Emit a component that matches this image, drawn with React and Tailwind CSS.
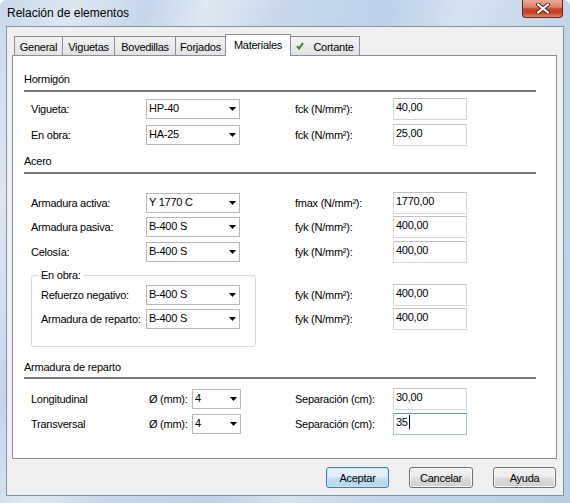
import React from "react";

function Combo({ value, wide = true }) {
  return (
    <div
      className={
        wide
          ? "w-[94px] h-[20px] flex items-center justify-between bg-white border border-[#b9b9b9] pl-[2px] pr-[3px]"
          : "w-[49px] h-[20px] flex items-center justify-between bg-white border border-[#b9b9b9] pl-[2px] pr-[3px]"
      }
    >
      <span className="leading-[14px] -mt-[2px]">{value}</span>
      <svg width="7" height="4" viewBox="0 0 7 4" className="shrink-0">
        <path d="M0 0H7L3.5 4Z" fill="#000" />
      </svg>
    </div>
  );
}

function Field({ value, focused }) {
  return (
    <div
      className={
        focused
          ? "w-[74px] h-[22px] flex items-start bg-white border border-[#9cc3e6] border-t-[#5d96cb] pl-[2px] pt-[1px]"
          : "w-[74px] h-[22px] flex items-start bg-white border border-[#d6d6d6] border-t-[#c2c2c2] pl-[2px] pt-[1px]"
      }
    >
      <span className="leading-[14px]">{value}</span>
      {focused && <span className="w-px h-[14px] bg-black ml-[1px]" />}
    </div>
  );
}

function Header({ title, className, lineClass }) {
  return (
    <div className={className}>
      <div className="h-[14px] leading-[14px]">{title}</div>
      <div className={lineClass} />
    </div>
  );
}

function Right({ label, value, focused }) {
  return (
    <div className="flex items-center">
      <div className="w-[98px] leading-[14px]">{label}</div>
      <Field value={value} focused={focused} />
    </div>
  );
}

function Row({ label, combo, rlabel, value, className }) {
  return (
    <div className={className}>
      <div className="w-[115px] leading-[14px]">{label}</div>
      <Combo value={combo} />
      <div className="w-[55px]" />
      <Right label={rlabel} value={value} />
    </div>
  );
}

function Tab({ label, className, check }) {
  return (
    <div className={className}>
      {check && (
        <svg width="8" height="8" viewBox="0 0 8 8" className="mr-[9px] -mt-[2px]">
          <path d="M1 4.2L3 6.5L7 1" fill="none" stroke="#2f8a16" strokeWidth="2" />
        </svg>
      )}
      <span>{label}</span>
    </div>
  );
}

const inactiveTab =
  "h-[19px] flex items-center justify-center border border-b-0 border-[#8c8f97] bg-[linear-gradient(#f4f4f4,#e2e2e2)] leading-[14px] pt-[1px]";

export default function App() {
  return (
    <div className="w-[570px] h-[503px] flex flex-col text-[11px] tracking-[-0.25px] text-black font-['Liberation_Sans',Arial,sans-serif] rounded-t-[6px] overflow-hidden bg-[linear-gradient(110deg,#c9d9ea_0%,#dde7f2_10%,#c5d6e9_20%,#e0e9f3_28%,#c8d8ea_38%,#bdd1e7_52%,#d7e3f0_62%,#c2d5e9_75%,#b8cee6_100%)]">
      {/* Title bar */}
      <div className="h-[26px] flex items-start shrink-0">
        <div className="pl-[7px] pt-[6px] text-[12px] tracking-[0px] leading-[14px] flex-1">
          Relación de elementos
        </div>
        <div className="mr-[7px] w-[41px] h-[18px] rounded-b-[4px] border border-t-0 border-[#6a2316] flex items-center justify-center bg-[linear-gradient(#eaa999_0%,#d98470_42%,#c5442c_52%,#c9462b_78%,#e08a6c_100%)]">
          <svg width="14" height="11" viewBox="0 0 14 11">
            <path d="M2 1.5L12 9.5M12 1.5L2 9.5" stroke="#5a2a22" strokeWidth="4" strokeLinecap="round" />
            <path d="M2 1.5L12 9.5M12 1.5L2 9.5" stroke="#ffffff" strokeWidth="2.2" strokeLinecap="round" />
          </svg>
        </div>
      </div>

      {/* Client */}
      <div className="flex-1 mx-[6px] mb-[7px] border border-[#7f93ab] bg-[#f0f0f0] flex flex-col pt-[7px] pl-[5px] pr-[6px]">
        {/* Tabs */}
        <div className="h-[21px] flex items-end pl-[2px] shrink-0">
          <Tab label="General" className={`w-[49px] ${inactiveTab}`} />
          <Tab label="Viguetas" className={`w-[53px] -ml-px ${inactiveTab}`} />
          <Tab label="Bovedillas" className={`w-[62px] -ml-px ${inactiveTab}`} />
          <Tab label="Forjados" className={`w-[51px] -ml-px ${inactiveTab}`} />
          <div className="w-[66px] -ml-px h-[22px] -mb-px relative z-10 bg-white border border-b-0 border-[#8c8f97] flex items-start justify-center pt-[3px] leading-[14px]">
            Materiales
          </div>
          <Tab label="Cortante" check className={`w-[70px] -ml-px ${inactiveTab}`} />
        </div>

        {/* Panel */}
        <div className="h-[404px] shrink-0 bg-white border border-[#8c8f97] pl-[11px] pr-[20px]">
          <Header title="Hormigón" className="mt-[16px]" lineClass="mt-[4px] h-[2px] bg-[#777777]" />
          <Row className="mt-[6px] h-[22px] flex items-center pl-[7px]" label="Vigueta:" combo="HP-40" rlabel="fck (N/mm²):" value="40,00" />
          <Row className="mt-[4px] h-[22px] flex items-center pl-[7px]" label="En obra:" combo="HA-25" rlabel="fck (N/mm²):" value="25,00" />

          <Header title="Acero" className="mt-[8px]" lineClass="mt-[4px] h-[2px] bg-[#777777]" />
          <Row className="mt-[18px] h-[22px] flex items-center pl-[7px]" label="Armadura activa:" combo="Y 1770 C" rlabel="fmax (N/mm²):" value="1770,00" />
          <Row className="mt-[2px] h-[22px] flex items-center pl-[7px]" label="Armadura pasiva:" combo="B-400 S" rlabel="fyk (N/mm²):" value="400,00" />
          <Row className="mt-[3px] h-[22px] flex items-center pl-[7px]" label="Celosía:" combo="B-400 S" rlabel="fyk (N/mm²):" value="400,00" />

          <div className="mt-[5px] flex items-start pl-[7px]">
            <fieldset className="w-[225px] border border-[#d5dbe0] rounded-[3px] pb-[16px]">
              <legend className="ml-[7px] px-[2px] leading-[14px] h-[14px]">En obra:</legend>
              <div className="mt-[2px] h-[22px] flex items-center pl-[9px]">
                <div className="w-[105px] leading-[14px]">Refuerzo negativo:</div>
                <Combo value="B-400 S" />
              </div>
              <div className="mt-[2px] h-[22px] flex items-center pl-[9px]">
                <div className="w-[105px] leading-[14px]">Armadura de reparto:</div>
                <Combo value="B-400 S" />
              </div>
            </fieldset>
            <div className="ml-[39px] pt-[16px] flex flex-col">
              <div className="h-[22px] flex items-center">
                <Right label="fyk (N/mm²):" value="400,00" />
              </div>
              <div className="mt-[2px] h-[22px] flex items-center">
                <Right label="fyk (N/mm²):" value="400,00" />
              </div>
            </div>
          </div>

          <Header title="Armadura de reparto" className="mt-[13px]" lineClass="mt-[3px] h-[2px] bg-[#777777]" />
          <div className="mt-[9px] h-[22px] flex items-center pl-[7px]">
            <div className="w-[118px] leading-[14px]">Longitudinal</div>
            <div className="w-[43px] leading-[14px]">Ø (mm):</div>
            <Combo value="4" wide={false} />
            <div className="w-[54px]" />
            <Right label="Separación (cm):" value="30,00" />
          </div>
          <div className="mt-[3px] h-[22px] flex items-center pl-[7px]">
            <div className="w-[118px] leading-[14px]">Transversal</div>
            <div className="w-[43px] leading-[14px]">Ø (mm):</div>
            <Combo value="4" wide={false} />
            <div className="w-[54px]" />
            <Right label="Separación (cm):" value="35" focused />
          </div>
        </div>

        {/* Buttons */}
        <div className="mt-[8px] flex justify-end gap-[20px] pr-[1px]">
          <div className="w-[63px] h-[21px] rounded-[3px] border border-[#3c7fb1] flex items-center justify-center leading-[14px] bg-[linear-gradient(#eaf4fb_0%,#dcecf8_48%,#c4e0f4_52%,#b5d6ef_100%)] shadow-[inset_0_0_0_1px_#c9e6fa]">
            Aceptar
          </div>
          <div className="w-[64px] h-[21px] rounded-[3px] border border-[#707070] flex items-center justify-center leading-[14px] bg-[linear-gradient(#f2f2f2_0%,#ebebeb_48%,#dddddd_52%,#cfcfcf_100%)] shadow-[inset_0_0_0_1px_#fbfbfb]">
            Cancelar
          </div>
          <div className="w-[63px] h-[21px] rounded-[3px] border border-[#707070] flex items-center justify-center leading-[14px] bg-[linear-gradient(#f2f2f2_0%,#ebebeb_48%,#dddddd_52%,#cfcfcf_100%)] shadow-[inset_0_0_0_1px_#fbfbfb]">
            Ayuda
          </div>
        </div>
      </div>
    </div>
  );
}
